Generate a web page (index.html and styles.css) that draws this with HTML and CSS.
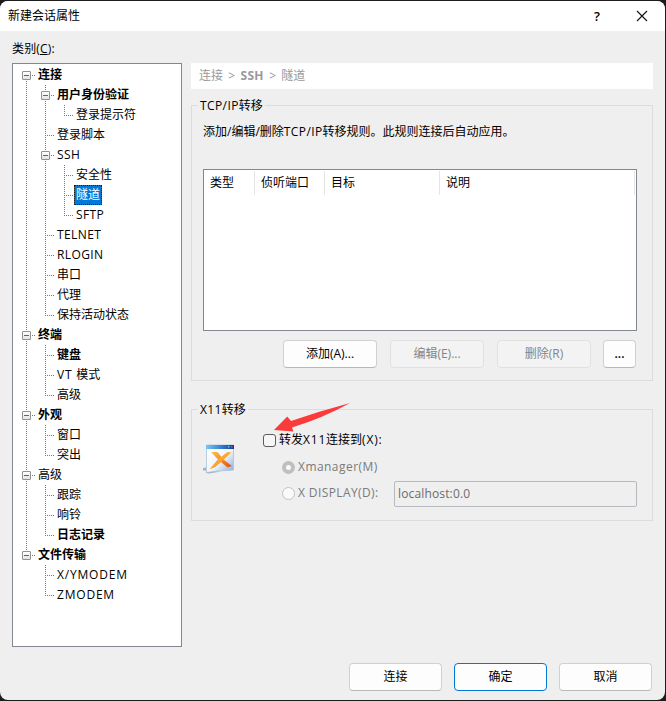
FILE: index.html
```html
<!DOCTYPE html>
<html lang="zh-CN">
<head>
<meta charset="utf-8">
<title>新建会话属性</title>
<link rel="stylesheet" href="styles.css">
</head>
<body>
<div class="dialog">
  <header class="titlebar">
    <h1>新建会话属性</h1>
    <span class="help">?</span>
    <svg class="close" width="12" height="12" viewBox="0 0 12 12"><path d="M1 1L11 11M11 1L1 11" fill="none" stroke="#111" stroke-width="1.1"/></svg>
  </header>
  <div class="category">类别(<u>C</u>):</div>
  <main class="content">
    <nav class="tree">
      <ul class="root">
        <li class="open"><div class="row bold">连接</div>
          <ul>
            <li class="open"><div class="row bold">用户身份验证</div>
              <ul><li><div class="row">登录提示符</div></li></ul>
            </li>
            <li><div class="row">登录脚本</div></li>
            <li class="open"><div class="row"><span class="lat">SSH</span></div>
              <ul>
                <li><div class="row">安全性</div></li>
                <li><div class="row selected"><span>隧道</span></div></li>
                <li><div class="row"><span class="lat">SFTP</span></div></li>
              </ul>
            </li>
            <li><div class="row"><span class="lat">TELNET</span></div></li>
            <li><div class="row"><span class="lat">RLOGIN</span></div></li>
            <li><div class="row">串口</div></li>
            <li><div class="row">代理</div></li>
            <li><div class="row">保持活动状态</div></li>
          </ul>
        </li>
        <li class="open"><div class="row bold">终端</div>
          <ul>
            <li><div class="row bold">键盘</div></li>
            <li><div class="row"><span class="wide">VT </span>模式</div></li>
            <li><div class="row">高级</div></li>
          </ul>
        </li>
        <li class="open"><div class="row bold">外观</div>
          <ul>
            <li><div class="row">窗口</div></li>
            <li><div class="row">突出</div></li>
          </ul>
        </li>
        <li class="open"><div class="row">高级</div>
          <ul>
            <li><div class="row">跟踪</div></li>
            <li><div class="row">响铃</div></li>
            <li><div class="row bold">日志记录</div></li>
          </ul>
        </li>
        <li class="open"><div class="row bold">文件传输</div>
          <ul>
            <li><div class="row"><span class="wide">X/YMODEM</span></div></li>
            <li><div class="row"><span class="wide">ZMODEM</span></div></li>
          </ul>
        </li>
      </ul>
    </nav>
    <div class="panel">
      <div class="crumbs"><span>连接</span><i>&gt;</i><b>SSH</b><i>&gt;</i><span>隧道</span></div>
      <fieldset class="tcp">
        <legend><span class="lat">TCP/IP</span>转移</legend>
        <p>添加/编辑/删除<span class="lat">TCP/IP</span>转移规则。此规则连接后自动应用。</p>
        <div class="rules">
          <div class="heads">
            <span>类型</span><span>侦听端口</span><span>目标</span><span>说明</span>
          </div>
        </div>
        <div class="actions">
          <button>添加(A)...</button>
          <button disabled>编辑(E)...</button>
          <button disabled>删除(R)</button>
          <button class="more">...</button>
        </div>
      </fieldset>
      <fieldset class="x11">
        <legend><span class="lat">X11</span>转移</legend>
        <div class="forward">
          <svg class="logo" width="32" height="32" viewBox="0 0 32 32">
            <defs>
              <linearGradient id="bar"><stop offset="0" stop-color="#70cbf5"/><stop offset=".5" stop-color="#3e83d4"/><stop offset="1" stop-color="#143a9c"/></linearGradient>
              <linearGradient id="pane" x2="1" y2="1"><stop offset="0" stop-color="#fff"/><stop offset=".55" stop-color="#f0f5fc"/><stop offset="1" stop-color="#86acdc"/></linearGradient>
              <linearGradient id="flame" x2="1" y2="1"><stop offset="0" stop-color="#ffc64b"/><stop offset="1" stop-color="#e54a08"/></linearGradient>
            </defs>
            <path d="M0 26L3 25.500V29L18 29.500L6 31.500L3 31V28.500H0Z" fill="#8d9bab" opacity=".75"/>
            <path d="M3.500 3H30.500V28L15 29L3.500 30.500Z" fill="url(#pane)" stroke="#a3bcd9" stroke-width=".7"/>
            <path d="M3 3H31V7H3Z" fill="url(#bar)"/>
            <path d="M25 4h1.500v1.500H25z" fill="#65c7f0"/><path d="M28 4h1.500v1.500H28z" fill="#dc3d5c"/>
            <path d="M8 10H14.500L18.500 15L24 10.500H28L20.500 17.500L29 24L24.500 25.500L18 20L12 25L7 27L15 17.500Z" fill="url(#flame)"/>
            <path d="M28 10.500H24L17.500 15.500L15 17.500L7 27L12 25L18 20L20.500 17.500Z" fill="#ffad35" opacity=".8"/>
          </svg>
          <div class="options">
            <label class="check"><span class="box"></span>转发<span class="wide">X11</span>连接到<span class="wide">(X):</span></label>
            <label class="radio"><span class="dot on"></span><span class="xm">Xmanager(M)</span></label>
            <div class="line">
              <label class="radio"><span class="dot"></span><span class="xd">X DISPLAY(D):</span></label>
              <div class="field">localhost:0.0</div>
            </div>
          </div>
        </div>
      </fieldset>
    </div>
  </main>
  <footer class="buttons">
    <button>连接</button>
    <button class="default">确定</button>
    <button>取消</button>
  </footer>
  <svg class="arrow" width="78" height="32" viewBox="273 401 78 32"><path d="M274 430L287.300 416.500L291 421Q320 411 350 403Q323 418 292 427.500L293.500 431.500Z" fill="#fb3b3b"/></svg>
</div>
</body>
</html>
```
FILE: styles.css
```css
*, *::before, *::after { box-sizing: border-box; }
body {
  margin: 0;
  height: 701px;
  padding: 1px 1px 1px 0;
  background: #1c1c1c;
  overflow: hidden;
  font: 12px/20px "Open Sans", "Noto Sans CJK SC", sans-serif;
  color: #000;
}
.dialog {
  position: relative;
  height: 699px;
  border-radius: 8px;
  background: #efefef;
  overflow: hidden;
  display: flex;
  flex-direction: column;
}
.titlebar {
  height: 30px;
  flex: none;
  background: #fff;
  display: flex;
  align-items: center;
  padding: 0 17px 0 8px;
}
h1 { margin: 0; font-size: 12px; font-weight: 400; flex: 1; }
.help { font-size: 13px; font-weight: 600; margin-right: 36px; }
.category { height: 32px; padding: 8px 12px 0; letter-spacing: .15px; }
.content { display: flex; gap: 9px; padding-left: 12px; height: 584px; }
.lat { letter-spacing: .4px; }
.wide { letter-spacing: .8px; }

.tree { width: 170px; height: 584px; background: #fff; border: 1px solid #828790; padding-top: 1px; }
ul { list-style: none; margin: 0 0 0 19px; padding: 0; }
ul.root { margin-left: 13px; }
li { position: relative; }
li::before {
  content: "";
  position: absolute;
  left: 0;
  top: 0;
  bottom: 0;
  width: 1px;
  background: repeating-linear-gradient(#777 0 1px, transparent 1px 2px);
}
li:last-child::before { bottom: auto; height: 11px; }
.root > li:first-child::before { top: 10px; }
.row { position: relative; height: 20px; padding-left: 12px; white-space: nowrap; }
.row::before {
  content: "";
  position: absolute;
  left: 0;
  top: 10px;
  width: 9px;
  height: 1px;
  background: repeating-linear-gradient(90deg, #777 0 1px, transparent 1px 2px);
}
.open > .row::after {
  content: "";
  position: absolute;
  left: -4px;
  top: 6px;
  width: 9px;
  height: 9px;
  border: 1px solid #919191;
  border-radius: 1px;
  background: linear-gradient(#4b63a7, #4b63a7) center / 5px 1px no-repeat, linear-gradient(#fff, #e3e3e3);
}
.bold { font-weight: 700; }
.selected span { display: inline-block; height: 20px; line-height: 18px; margin-left: -2px; padding: 0 1px; background: #0078d7; color: #fff; border: 1px dotted #222; }

.panel { width: 462px; }
.crumbs { height: 26px; background: #fff; color: #999; display: flex; align-items: center; padding-left: 8px; }
.crumbs i { font-style: normal; width: 17.500px; text-align: center; }
.crumbs b { letter-spacing: .3px; }
fieldset { margin: 0; padding: 0; border: 1px solid #dcdcdc; min-width: 0; }
legend { margin-left: 6px; padding: 0 2px; height: 17px; line-height: 17px; }
.tcp { margin-top: 8px; height: 284px; }
.x11 { margin-top: 20px; height: 120px; }
.tcp p { margin: 8px 0 0 11px; height: 20px; white-space: nowrap; }
.rules { margin: 27px 0 0 11px; width: 434px; height: 162px; background: #fff; border: 1px solid #828790; }
.heads { display: grid; grid-template-columns: 51px 70px 115px 195px; margin-top: 1px; line-height: 24px; }
.heads span { border-right: 1px solid #e5e5e5; padding-left: 6px; height: 24px; }
.actions { display: flex; gap: 13px; margin: 9px 0 0 91px; }
button {
  width: 93px;
  height: 28px;
  padding: 0 0 1px;
  border: 1px solid #d0d0d0;
  border-bottom-color: #b8b8b8;
  border-radius: 4px;
  background: #fdfdfd;
  font: inherit;
  color: #000;
}
.actions button { width: 94px; }
.actions .more { width: 33px; margin-left: -1px; font-weight: 600; }
button:disabled { background: #f3f3f3; border-color: #e1e1e1; color: #858585; }
button.default { border-color: #0078d4; }

.forward { display: flex; padding: 12px 0 0 11px; }
.logo { margin-top: 12px; }
.options { margin-left: 28px; }
.check, .radio { display: flex; align-items: center; height: 20px; white-space: nowrap; }
.box { width: 13px; height: 13px; border: 1px solid #5b5b5b; border-radius: 3px; background: #f6f6f6; margin-right: 3px; }
.radio { margin: 7px 0 0 19px; color: #7a7a7a; }
.dot { width: 13px; height: 13px; border: 1px solid #c3c3c3; border-radius: 50%; background: #fafafa; margin-right: 3px; }
.dot.on { border: 4px solid #bfbfbf; }
.xm { letter-spacing: .45px; }
.xd { letter-spacing: .4px; }
.line { display: flex; }
.line .radio { width: 112px; margin-top: 6px; }
.field { width: 243px; height: 26px; margin-top: 4px; border: 1px solid #b6babf; border-radius: 2px; padding: 2px 3px; color: #6b6b6b; letter-spacing: .15px; }
.buttons { display: flex; gap: 12px; justify-content: flex-end; padding: 16px 13px 0 0; }
.arrow { position: absolute; left: 273px; top: 400px; }
```
